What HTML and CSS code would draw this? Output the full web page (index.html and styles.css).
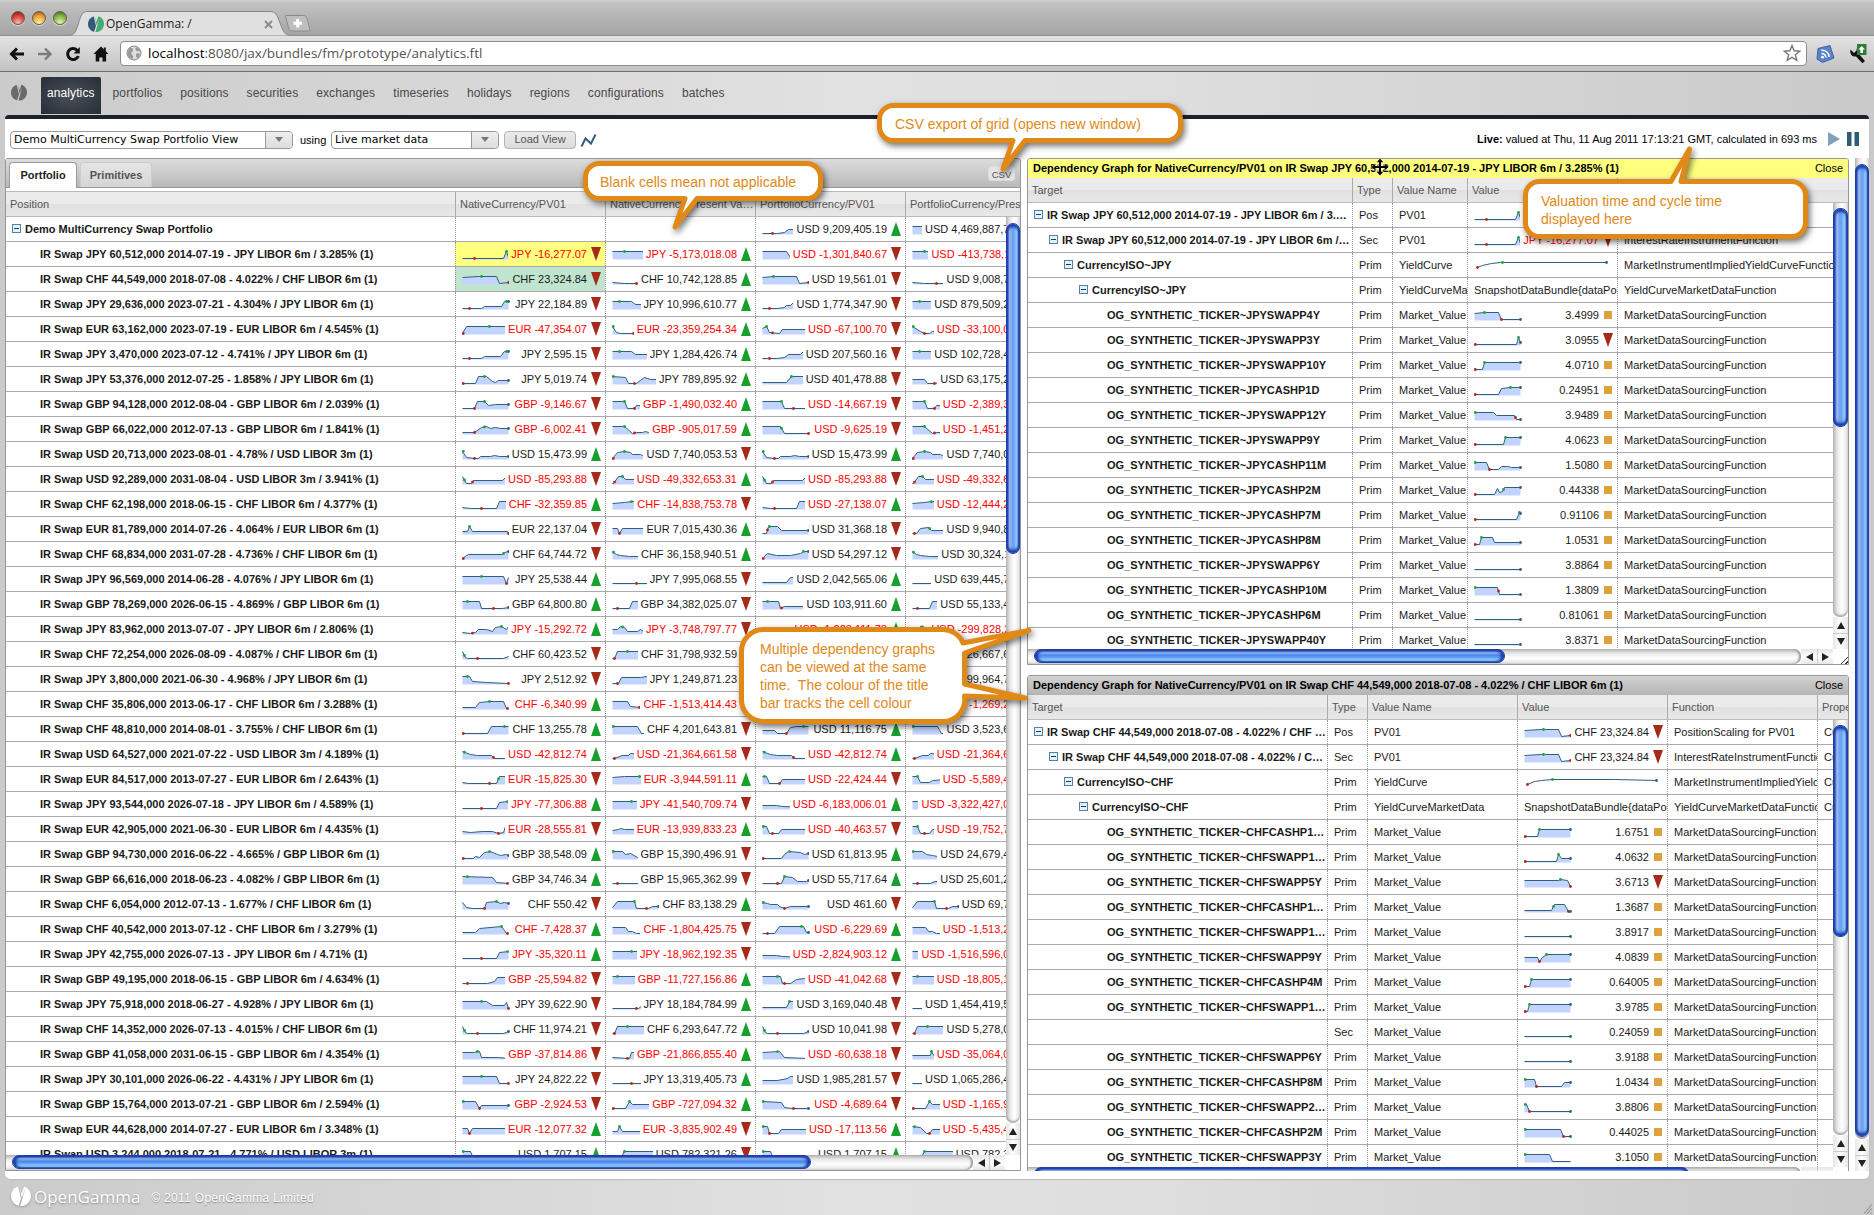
FILE: index.html
```html
<!DOCTYPE html>
<html lang="en">
<head>
<meta charset="utf-8">
<title>OpenGamma: /</title>
<link rel="stylesheet" href="styles.css">
</head>
<body>
<svg class="defs" aria-hidden="true">
  <symbol id="mark" viewBox="0 0 20 20">
    <path class="mark-a" d="M7.2 .6C3 1.500 0 5.200 0 10c0 4.900 3.100 8.800 7.600 9.700L10 12.500z"/>
    <path class="mark-b" d="M8.600.2 10.600 7.600 12.900.4C17 1.600 20 5.300 20 10c0 5.200-4 9.600-8.800 10H9.300L14.200 2.800 10.800 12z"/>
  </symbol>
</svg>

<header class="chrome">
  <div class="tabstrip">
    <div class="lights"><i class="l-red"></i><i class="l-amber"></i><i class="l-green"></i></div>
    <div class="tab">
      <svg class="tab-shape" viewBox="0 0 222 25"><path d="M0 24.500C6 24 7 20 9 14S12 .5 18 .5H201C207 .5 208 4 211 12S215 24 222 24.500" /></svg>
      <svg class="favicon"><use href="#mark"/></svg>
      <span class="tab-title">OpenGamma: /</span>
      <svg class="tab-close" viewBox="0 0 9 9"><path d="M1 1l7 7M8 1l-7 7"/></svg>
    </div>
    <svg class="newtab" viewBox="0 0 26 17"><path class="nt-box" d="M1 .5H18.500C21 .5 21.500 2 23 7L24.500 13.500C25 15.500 24.500 16 22.500 16H7C4.500 16 4 14 3 11L1 3C.5 1.500.5.5 1 .5z"/><path class="nt-plus" d="M8.500 8.300h8.500M12.700 4v8.600"/></svg>
  </div>
  <div class="toolbar">
    <svg class="tb-icon" viewBox="0 0 16 16"><path d="M8 2.500 2.500 8 8 13.500M3 8h12"/></svg>
    <svg class="tb-icon dim" viewBox="0 0 16 16"><path d="M8 2.500 13.500 8 8 13.500M13 8H1"/></svg>
    <svg class="tb-icon" viewBox="0 0 16 16"><path d="M12.500 4.600A5.500 5.500 0 1 0 13.300 10"/><path class="solid" d="M14.800 1v6.500H8.600z"/></svg>
    <svg class="tb-icon" viewBox="0 0 16 16"><path class="solid" d="M8 .5 .5 8h2.200v7.500h3.600v-4h3.200v4h3.600V8h2.400L12.800 5.200V1.500h-2V3.300z"/></svg>
    <div class="omnibox">
      <svg class="globe" viewBox="0 0 16 16"><circle cx="8" cy="8" r="7"/><path d="M3 3.500C6 2 7 3 7 5S4.500 7.500 5.500 9 8 11 6.500 14C3 13 1.500 10 1.500 7.500zM10 2c-1 2-.5 3.500 1 4s2.500 0 3.300.8C14 4.500 12.500 2.600 10 2zM10.500 8.500c1.500-.5 3 0 3.500 1-.5 2-1.800 3.300-3 4-.8-1.500-1.500-4-.5-5z"/></svg>
      <span class="url"><b>localhost</b>:8080/jax/bundles/fm/prototype/analytics.ftl</span>
      <svg class="star" viewBox="0 0 18 18"><path d="M9 1.500l2.100 5.300 5.600.4-4.300 3.600 1.400 5.500L9 13.300l-4.800 3 1.400-5.500L1.300 7.200l5.600-.4z"/></svg>
    </div>
    <svg class="rss" viewBox="0 0 20 20"><path class="rss-bg" d="M3 4.500 15 1.500 19 14 7.500 18.500 2 15z"/><circle cx="7.500" cy="13.200" r="1.400"/><path class="rss-arc" d="M6.500 9.500c2.500 0 4.200 1.500 4.500 4M6.300 6.300c4.500-.2 7.500 2.600 7.900 6.500"/></svg>
    <svg class="wrench" viewBox="0 0 18 20"><path class="wr" d="M1.500 5.500 5 9l2.500-2.500L8 3.500C11 6 10 9 9.500 9.500L16 17l-2.500 2.300L7 12.500C3 13 .5 10 1.500 5.500z"/><path class="wr-up" d="M8 0h9.500v11H8z"/><path class="wr-arrow" d="M12.700 2 16 5.500h-2V9h-2.600V5.500h-2z"/></svg>
  </div>
</header>

<nav class="nav">
  <svg class="nav-mark"><use href="#mark"/></svg>
  <a class="on">analytics</a><a>portfolios</a><a>positions</a><a>securities</a><a>exchanges</a><a>timeseries</a><a>holidays</a><a>regions</a><a>configurations</a><a>batches</a>
</nav>

<main class="page">
  <div class="controls">
    <div class="combo combo-view"><span>Demo MultiCurrency Swap Portfolio View</span><i></i></div>
    <label>using</label>
    <div class="combo combo-data"><span>Live market data</span><i></i></div>
    <button class="load">Load View</button>
    <svg class="pulse" viewBox="0 0 18 15"><path d="M1.500 13.500 5.500 5.500 11 10.500 15.500 1.500"/></svg>
    <p class="status"><b>Live:</b> valued at Thu, 11 Aug 2011 17:13:21 GMT, calculated in 693 ms</p>
    <svg class="play" viewBox="0 0 12 14"><path d="M0 0 12 7 0 14z"/></svg>
    <svg class="pause" viewBox="0 0 12 14"><path d="M0 0h4.500v14H0zM7.500 0H12v14H7.500z"/></svg>
  </div>
  <div class="work">
    <section class="panel portfolio">
      <div class="tabs"><a class="on">Portfolio</a><a>Primitives</a><span class="csv">CSV</span></div>
      <div class="head"><span>Position</span><span>NativeCurrency/PV01</span><span>NativeCurrency/Present Value</span><span>PortfolioCurrency/PV01</span><span class="cut">PortfolioCurrency/Present Value</span></div>
      <div class="view"><div class="rows" id="portfolio"></div>
        <div class="vbar"><div class="track"><div class="thumb"></div></div><div class="btn up"></div><div class="btn down"></div></div>
      </div>
      <div class="hbar"><div class="track"><div class="thumb"></div></div><div class="btn left"></div><div class="btn right"></div><div class="corner"></div></div>
    </section>
    <div class="graphs">
      <section class="panel graph graph-jpy">
        <div class="title"><b>Dependency Graph for NativeCurrency/PV01 on IR Swap JPY 60,512,000 2014-07-19 - JPY LIBOR 6m / 3.285% (1)</b><span>Close</span></div>
        <div class="head"><span>Target</span><span>Type</span><span>Value Name</span><span>Value</span><span>Function</span></div>
        <div class="view"><div class="rows" id="jpy"></div>
          <div class="vbar"><div class="track"><div class="thumb"></div></div><div class="btn up"></div><div class="btn down"></div></div>
        </div>
        <div class="hbar"><div class="track"><div class="thumb"></div></div><div class="btn left"></div><div class="btn right"></div><div class="corner grip"></div></div>
      </section>
      <section class="panel graph graph-chf">
        <div class="title"><b>Dependency Graph for NativeCurrency/PV01 on IR Swap CHF 44,549,000 2018-07-08 - 4.022% / CHF LIBOR 6m (1)</b><span>Close</span></div>
        <div class="head"><span>Target</span><span>Type</span><span>Value Name</span><span>Value</span><span>Function</span><span class="cut">Properties</span></div>
        <div class="view"><div class="rows" id="chf"></div>
          <div class="vbar"><div class="track"><div class="thumb"></div></div><div class="btn up"></div><div class="btn down"></div></div>
        </div>
        <div class="hbar"><div class="track"><div class="thumb"></div></div><div class="btn left"></div><div class="btn right"></div><div class="corner grip"></div></div>
      </section>
    </div>
    <div class="vbar outer"><div class="track"><div class="thumb"></div></div><div class="btn up"></div><div class="btn down"></div></div>
  </div>
</main>

<footer class="foot">
  <svg class="foot-mark"><use href="#mark"/></svg>
  <span class="brand">OpenGamma</span>
  <span class="copy">© 2011 OpenGamma Limited</span>
  <svg class="foot-grip" viewBox="0 0 10 12"><path d="M0 12 10 0M4 12l6-7M8 12l2-2"/></svg>
</footer>

<div class="callout c-csv">
  <svg viewBox="0 0 306 72"><path d="M17 2.500H289A14 14 0 0 1 303.500 17V23A14 14 0 0 1 289 37.500H148L126 66 136 37.500H17A14 14 0 0 1 2.500 23V17A14 14 0 0 1 17 2.500z"/></svg>
  <p>CSV export of grid (opens new window)</p>
</div>
<div class="callout c-blank">
  <svg viewBox="0 0 240 72"><path d="M17 2.500H223A14 14 0 0 1 237.500 17V23A14 14 0 0 1 223 37.500H114L92 66 102 37.500H17A14 14 0 0 1 2.500 23V17A14 14 0 0 1 17 2.500z"/></svg>
  <p>Blank cells mean not applicable</p>
</div>
<div class="callout c-time">
  <svg viewBox="0 0 285 96"><path d="M17 36.500H148L166.500 4 158 36.500H268A14 14 0 0 1 282.500 51V77A14 14 0 0 1 268 91.500H17A14 14 0 0 1 2.500 77V51A14 14 0 0 1 17 36.500z"/></svg>
  <p>Valuation time and cycle time<br>displayed here</p>
</div>
<div class="callout c-graphs">
  <svg viewBox="0 0 294 98"><path d="M25 2.500H203A22 22 0 0 1 224 16L290 3.500 225.500 26V57L286 71 225.500 69A22 22 0 0 1 203 94.500H25A22 22 0 0 1 2.500 72V25A22 22 0 0 1 25 2.500z"/></svg>
  <p>Multiple dependency graphs<br>can be viewed at the same<br>time.&nbsp; The colour of the title<br>bar tracks the cell colour</p>
</div>
<svg class="move" viewBox="0 0 18 18"><path d="M9 .5l3.300 3.800H10V8h3.700V5.700L17.500 9l-3.800 3.300V10H10v3.700h2.300L9 17.500l-3.300-3.800H8V10H4.300v2.300L.5 9l3.800-3.300V8H8V4.300H5.700z"/></svg>
<script src="app.js"></script>
</body>
</html>
```
FILE: styles.css
```css
* { box-sizing: border-box; }
html, body { height: 100%; }
body {
  margin: 0; display: flex; flex-direction: column; overflow: hidden;
  font: 11px/24px "Liberation Sans", Arial, sans-serif; color: #1a1a1a;
  background: linear-gradient(90deg, #cbcbcb, #e1e1e1 45%, #dfdfdf 60%, #c9c9c9);
}
p { margin: 0; }
svg { display: block; flex: none; }
.defs { position: absolute; width: 0; height: 0; }

/* browser frame */
.tabstrip {
  display: flex; height: 36px; padding: 11px 0 0 11px; border-bottom: 1px solid #8d8d8d;
  background: linear-gradient(#cfcfcf, #c2c2c2 8%, #a4a4a4);
}
.lights { display: flex; gap: 7px; width: 61px; }
.lights i { width: 14px; height: 14px; border-radius: 50%; border: 1px solid #6b5a50; box-shadow: 0 1px 1px #ddd; }
.l-red { background: radial-gradient(circle at 50% 90%, #f9b9b0, #d5443a 55%, #7d100c); }
.l-amber { background: radial-gradient(circle at 50% 90%, #fff3a0, #eda438 55%, #8c4a05); }
.l-green { background: radial-gradient(circle at 50% 90%, #e2f9a8, #82b844 55%, #35640d); }
.tab { display: flex; align-items: center; position: relative; width: 214px; height: 25px; padding: 1px 0 0 16px; margin-right: -1px; }
.tab-shape { position: absolute; left: -3px; top: 0; width: 222px; height: 25px; fill: #e0e0e0; stroke: #888; }
.favicon { position: relative; width: 16px; height: 16px; --a: #35597a; --b: #43ab74; }
.mark-a { fill: var(--a); }
.mark-b { fill: var(--b); }
.tab-title { position: relative; margin-left: 2px; color: #222; font: 12px/16px "Open Sans", sans-serif; width: 158px; }
.tab-close { position: relative; width: 9px; height: 9px; stroke: #8c8c8c; stroke-width: 2; }
.newtab { width: 26px; height: 17px; margin-top: 4px; }
.nt-box { fill: #bebebe; stroke: #8a8a8a; }
.nt-plus { stroke: #fff; stroke-width: 3; }
.toolbar {
  display: flex; align-items: center; height: 36px; padding: 0 7px 0 9px; border-bottom: 1px solid #6e6e6e;
  background: linear-gradient(#e2e2e2, #c3c3c3);
}
.tb-icon { width: 16px; height: 16px; margin-right: 12px; fill: none; stroke: #111; stroke-width: 3; }
.tb-icon.dim { stroke: #7b7b7b; stroke-width: 2.400; }
.tb-icon .solid { fill: #111; stroke: none; }
.omnibox {
  display: flex; align-items: center; flex: 1; height: 25px; margin: -1px 8px 0 -1px; padding: 0 5px;
  background: #fff; border: 1px solid #8c8c8c; border-radius: 4px;
}
.globe { width: 16px; height: 16px; stroke: #888; fill: #ddd; }
.globe path { fill: #999; stroke: none; }
.url { flex: 1; margin-left: 6px; font: 13.500px/20px "Open Sans", sans-serif; color: #555; }
.url b { font-weight: 400; color: #000; }
.star { width: 18px; height: 18px; fill: #fff; stroke: #777; stroke-width: 1.400; }
.rss { width: 20px; height: 20px; margin-right: 14px; fill: #fff; }
.rss-bg { fill: #5b83c9; stroke: #3f63a5; stroke-linejoin: round; }
.rss-arc { fill: none; stroke: #fff; stroke-width: 1.600; }
.wrench { width: 18px; height: 20px; }
.wr { fill: #111; }
.wr-up { fill: #2d7b34; }
.wr-arrow { fill: #fff; }

/* site navigation */
.nav { display: flex; height: 43px; padding: 5px 0 0 11px; font-size: 12px; line-height: 32px; letter-spacing: .1px; color: #484848; }
.nav-mark { width: 16px; height: 17px; margin: 7px 14px 0 0; --a: #6a6a6a; --b: #6a6a6a; }
.nav a { padding: 0 9px; }
.nav .on { padding: 0 6px; margin-right: 3px; height: 37px; color: #fff; border-radius: 2px 2px 0 0; background: radial-gradient(#4a5058, #272d36); }

.page { flex: none; height: 1064px; width: 1864px; margin-left: 5px; border-top: 4px solid #1c212b; border-radius: 4px 4px 5px 5px; background: #fff; box-shadow: 0 1px 1px #bbb; }
.controls { display: flex; align-items: center; height: 39px; padding: 2px 10px 0 5px; }
.combo { display: flex; height: 18px; border: 1px solid #999; border-radius: 4px; background: #fff; font: 11px/16px "DejaVu Sans", sans-serif; color: #000; }
.combo span { flex: 1; padding-left: 3px; white-space: nowrap; }
.combo i { display: flex; justify-content: center; align-items: center; width: 27px; border-left: 1px solid #999; background: linear-gradient(#eee, #ddd); border-radius: 0 4px 4px 0; }
.combo i::after { content: ""; border: 4px solid transparent; border-top: 5px solid #777; border-bottom: 0; }
.combo-view { width: 283px; }
.combo-data { width: 168px; }
.controls label { width: 38px; padding-left: 7px; color: #000; }
.load { width: 72px; height: 18px; margin-left: 5px; padding: 0; font: 11px/15px "Liberation Sans", Arial, sans-serif; color: #555; border: 1px solid #b5b5b5; border-radius: 4px; background: linear-gradient(#eaeaea, #dcdcdc); }
.pulse { width: 18px; height: 15px; margin: 2px 0 0 4px; fill: none; stroke: #365f7d; stroke-width: 2; }
.status { flex: 1; text-align: right; color: #000; margin-top: -1px; }
.play { width: 12px; height: 14px; margin: -1px 7px 0 11px; fill: #7fa3bb; }
.pause { width: 12px; height: 14px; margin-top: -1px; fill: #2e5c7b; }

.work { display: flex; gap: 6px; height: 1013px; }
.panel { display: flex; flex-direction: column; border: 1px solid #989898; border-radius: 3px 3px 0 0; overflow: hidden; background: #fff; }
.portfolio { width: 1016px; --cols: 449px repeat(4, 150px); }
.graphs { display: flex; flex-direction: column; gap: 10px; width: 822px; overflow: hidden; }
.graph { flex: none; }
.graph-jpy { height: 507px; --cols: 324px 40px 75px 150px 1fr; --title: #ffff7e; }
.graph-chf { height: 508px; --cols: 299px 40px 150px 150px 150px 1fr; --title: linear-gradient(#d2d2d2, #b4b4b4); }

.tabs { display: flex; flex: none; height: 29px; padding: 3px 5px 0 3px; border-bottom: 1px solid #999; background: linear-gradient(#dcdcdc, #b9b9b9); font-weight: 700; }
.tabs a { height: 25px; width: 72px; text-align: center; color: #555; border: 1px solid #ccc; border-bottom: 0; border-radius: 4px 4px 0 0; background: linear-gradient(#e6e6e6, #d4d4d4); }
.tabs .on { width: 68px; height: 26px; margin-right: 3px; color: #222; background: #fff; border-color: #999; }
.csv { margin: 4px 0 0 auto; width: 27px; height: 15px; font: 9.500px/15px "Liberation Sans", Arial, sans-serif; text-align: center; color: #555; background: #e4e4e4; border: 1px solid #ddd; border-radius: 3px; }

.title { display: flex; flex: none; justify-content: space-between; height: 19px; padding: 0 5px; font-size: 11px; line-height: 18px; color: #000; background: var(--title); white-space: nowrap; }
.head { display: grid; flex: none; grid-template-columns: var(--cols); height: 25px; color: #555; border-bottom: 1px solid #bbb; background: linear-gradient(#ebebeb 50%, #e0e0e0 50%, #e8e8e8); }
.portfolio .head { height: 26px; margin-top: 3px; border-top: 1px solid #bbb; }
.head span { padding-left: 4px; overflow: hidden; text-overflow: ellipsis; white-space: nowrap; }
.head span + span { border-left: 1px solid #aaa; }
.head .cut { text-overflow: clip; }

.view { display: flex; flex: 1; min-height: 0; }
.rows { flex: 1; min-width: 0; overflow: hidden; }
.row { display: grid; grid-template-columns: var(--cols); height: 25px; border-bottom: 1px solid #aaa; }
.row > div { display: flex; min-width: 0; overflow: hidden; white-space: nowrap; }
.row > div + div { border-left: 1px dotted #999; padding-left: 6px; }
.name { font-weight: 700; }
.name span { overflow: hidden; text-overflow: ellipsis; padding-right: 1px; }
.tog { flex: none; width: 9px; height: 9px; margin: 7px 4px 0 0; border: 1px solid #56809f; background: linear-gradient(#1c3c66, #1c3c66) center / 5px 1px no-repeat, #e0f4fc; }
.neg { color: #f00; }
.cell-sel { background: #ffff80; }
.cell-green { background: #bfe5cf; }
.spark { flex: 1; min-width: 0; height: 14px; margin: 7px 3px 0 0; overflow: hidden; }
.spark svg { width: 140px; height: 14px; }
.s-fill { fill: #c2d3fd; }
.s-line { fill: none; stroke: #2f607f; }
.s-g { fill: #1ca53a; }
.s-r { fill: #c02318; }
.s-b { fill: #2f607f; }
.mk { flex: none; width: 10px; height: 14px; margin: 5px 4px 0 4px; }
.mk-u { background: #18a02c; clip-path: polygon(50% 0, 100% 100%, 0 100%); }
.mk-d { background: #a52a1a; clip-path: polygon(0 0, 100% 0, 50% 100%); }
.mk-s { width: 8px; height: 8px; margin: 8px 5px 0 5px; background: #dda23e; }

/* scrollbars */
.vbar { display: flex; flex-direction: column; flex: none; width: 14px; background: #fff; }
.graph .vbar { width: 15px; }
.hbar { display: flex; flex: none; height: 15px; background: #fff; }
.track { flex: 1; }
.vbar .track { padding-top: var(--start, 6px); border-radius: 0 0 7px 7px; background: linear-gradient(90deg, #b5b5b5, #e9e9e9 30%, #fff 60%, #e3e3e3); box-shadow: inset 0 -2px 2px #aaa; }
.hbar .track { padding-left: 6px; border-radius: 0 7px 7px 0; background: linear-gradient(#b5b5b5, #e9e9e9 30%, #fff 60%, #e3e3e3); box-shadow: inset -2px 0 2px #999; }
.vbar .thumb { height: var(--len); border-radius: 7px; border: 1px solid #1f3fa8; box-shadow: inset 0 3px 3px #1638a6, inset 0 -3px 3px #1638a6; background: linear-gradient(90deg, #2248b8, #9fc0f4 22%, #6f9ff0 45%, #6aa5f5 60%, #a5dcff 85%, #2a55b8); }
.hbar .thumb { width: var(--len); height: 14px; border-radius: 7px; border: 1px solid #1f3fa8; box-shadow: inset 3px 0 3px #1638a6, inset -3px 0 3px #1638a6; background: linear-gradient(#1f3fb0, #8db3f1 22%, #4e86ea 45%, #5c9cf5 60%, #a8e2ff 88%, #4a7bc8); }
.btn { display: flex; align-items: center; justify-content: center; background: linear-gradient(90deg, #e6e6e6, #fff 50%, #e6e6e6); }
.btn::after { content: ""; border: 4px solid transparent; }
.vbar .btn { height: 16px; }
.hbar .btn { width: 16px; background: linear-gradient(#e6e6e6, #fff 50%, #e6e6e6); }
.btn.up::after { border-bottom: 7px solid #222; border-top: 0; }
.btn.down { border-top: 1px solid #ccc; }
.btn.down::after { border-top: 7px solid #222; border-bottom: 0; }
.btn.left::after { border-right: 7px solid #222; border-left: 0; }
.btn.right { border-left: 1px solid #ccc; }
.btn.right::after { border-left: 7px solid #222; border-right: 0; }
.corner { width: 15px; background: #fff; }
.grip { background: repeating-linear-gradient(135deg, #333 0 1px, #fff 1px 3px) 8px 6px / 7px 9px no-repeat; clip-path: polygon(100% 30%, 100% 100%, 45% 100%); }
.portfolio .vbar { --len: 331px; }
.portfolio .hbar { --len: 799px; }
.graph-jpy .vbar { --start: 5px; --len: 219px; }
.graph-jpy .hbar { --len: 471px; }
.graph-chf .vbar { --start: 5px; --len: 212px; }
.graph-chf .hbar { --len: 655px; }
.outer { --len: 973px; }

.foot { display: flex; align-items: center; flex: 1; padding: 0 2px 0 11px; color: #fff; }
.foot-mark { width: 20px; height: 20px; --a: #fff; --b: #fff; filter: drop-shadow(0 1px 1px #999); margin-top: -2px; }
.brand { margin: 0 11px 0 3px; font: 17px/24px "Open Sans", sans-serif; text-shadow: 0 1px 2px #888; }
.copy { flex: 1; font-size: 12px; letter-spacing: .3px; text-shadow: 0 1px 1px #888; margin-top: 2px; }
.foot-grip { width: 8px; height: 12px; align-self: flex-end; stroke: #777; }

/* annotations floating over the page */
.callout { position: absolute; color: #e08917; font-size: 14px; line-height: 18px; }
.callout svg { width: 100%; overflow: visible; fill: #fff; stroke: #e08917; stroke-width: 5; stroke-linejoin: round; filter: drop-shadow(2px 3px 3px rgba(0,0,0,.55)); }
.callout p { position: absolute; white-space: nowrap; }
.c-csv { left: 877px; top: 103px; width: 306px; }
.c-csv p { left: 18px; top: 12px; }
.c-blank { left: 583px; top: 161px; width: 240px; }
.c-blank p { left: 17px; top: 12px; }
.c-time { left: 1523px; top: 145px; width: 285px; }
.c-time p { left: 18px; top: 47px; }
.c-graphs { left: 739px; top: 627px; width: 294px; }
.c-graphs p { left: 21px; top: 13px; }
.move { position: absolute; left: 1371px; top: 158px; width: 18px; height: 18px; fill: #000; stroke: #fff; stroke-width: .8; paint-order: stroke; }
```
FILE: app.js
```js
// Each cell is "text;points;dots". Points are x,y pairs in px, y 0 is the high line.
// Dots: r = low, g = high, b = last value, followed by the x position.
const FLAT_LOW = '0,7 46,7', FLAT_HIGH = '0,0 46,0';
const portfolio = [
  ['JPY 60,512,000 2014-07-19 - JPY LIBOR 6m / 3.285% (1)', 'd', 'JPY -16,277.07;0,7 41,7 44,0 46,6;r12 g44', 'JPY -5,173,018.08;0,0 46,0;g12', 'USD -1,301,840.67;0,0 24,0 28,6 46,6;', 'USD -413,738,112.40;0,0 46,0;g12'],
  ['CHF 44,549,000 2018-07-08 - 4.022% / CHF LIBOR 6m (1)', 'd', 'CHF 23,324.84;0,1 16,0 34,0 37,7 46,6;r46 g19', 'CHF 10,742,128.85;0,6 12,7 46,7;r24', 'USD 19,561.01;0,1 11,0 34,0 37,7 46,6;r46 g11', 'USD 9,008,746.21'],
  ['JPY 29,636,000 2023-07-21 - 4.304% / JPY LIBOR 6m (1)', 'd', 'JPY 22,184.89;0,7 19,7 22,5 39,5 42,0 46,0;r7 g44 b46', 'JPY 10,996,610.77;0,0 19,0 23,3 46,3;g7', 'USD 1,774,347.90;0,7 15,7 22,6 24,4 28,4 31,1 46,1;r7', 'USD 879,509,214.60'],
  ['EUR 63,162,000 2023-07-19 - EUR LIBOR 6m / 4.545% (1)', 'd', 'EUR -47,354.07;0,7 4,0 46,0;r0 g27', 'EUR -23,359,254.34;0,0 4,6 8,7 46,7;g0 r21', 'USD -67,100.70;0,2 4,0 7,6 17,7 20,3 46,3;g4 r10', 'USD -33,100,063.44;0,0 8,5 12,7 17,7 20,5 46,5;g0 r12'],
  ['JPY 3,470,000 2023-07-12 - 4.741% / JPY LIBOR 6m (1)', 'd', 'JPY 2,595.15;0,7 19,7 22,5 38,5 42,0 46,0;r7 g44 b46', 'JPY 1,284,426.74;0,0 19,0 23,3 46,3;g7', 'USD 207,560.16;0,7 15,7 22,6 26,3 38,3 41,0;r7', 'USD 102,728,450.18'],
  ['JPY 53,376,000 2012-07-25 - 1.858% / JPY LIBOR 6m (1)', 'd', 'JPY 5,019.74;0,7 13,7 16,0 24,0 30,5 33,6 36,4 46,4;r0 g22 b46', 'JPY 789,895.92;0,0 13,1 16,7 24,7 29,3 32,1 35,2 38,3 46,3;g0 r22', 'USD 401,478.88;0,6 24,6 29,0 46,0;g29', 'USD 63,175,281.90;0,3 12,3 15,7 24,7 26,4;r22'],
  ['GBP 94,128,000 2012-08-04 - GBP LIBOR 6m / 2.039% (1)', 'd', 'GBP -9,146.67;0,7 12,7 15,0 22,0 26,4 33,3 46,3;r12 g22 b46', 'GBP -1,490,032.40;0,0 12,0 15,7 22,7 24,4 46,4;g12 r22', 'USD -14,667.19;0,0 19,0 22,7 46,7;g19 r31', 'USD -2,389,351.70'],
  ['GBP 66,022,000 2012-07-13 - GBP LIBOR 6m / 1.841% (1)', 'd', 'GBP -6,002.41;0,6 12,6 19,1 24,0 28,2 33,1 38,2 46,2;r12 g22 b46', 'GBP -905,017.59;0,0 12,0 20,7 24,6 30,6 33,5 36,6 46,5;g12 r22', 'USD -9,625.19;0,0 18,0 22,7 46,7;g19 r46', 'USD -1,451,214.05'],
  ['USD 20,713,000 2023-08-01 - 4.78% / USD LIBOR 3m (1)', 'u', 'USD 15,473.99;0,0 4,6 12,7 16,7 18,5 28,5 32,4 37,5 46,5;g0 r12 b46', 'USD 7,740,053.53;0,7 5,1 12,0 18,1 20,3 28,3 30,4 46,4;r0 g12', 'USD 15,473.99;0,0 4,6 12,7 16,7 18,5 28,5 32,4 37,5 46,5;g0 r12 b46', 'USD 7,740,053.53'],
  ['USD 92,289,000 2031-08-04 - USD LIBOR 3m / 3.941% (1)', 'd', 'USD -85,293.88;0,0 4,7 9,7 11,4 40,4 43,1 46,1;g2 r10', 'USD -49,332,653.31;0,7 1,7 6,0 10,0 13,3 46,3;r2 g10', 'USD -85,293.88;0,0 4,7 9,7 11,4 40,4 43,1 46,1;g2 r10', 'USD -49,332,653.31'],
  ['CHF 62,198,000 2018-06-15 - CHF LIBOR 6m / 4.377% (1)', 'u', 'CHF -32,359.85;0,6 8,7 34,7 37,0 46,0;r19', 'CHF -14,838,753.78;0,2 12,1 20,0 46,0;g19', 'USD -27,138.07;0,6 8,7 34,7 37,0 46,0;r12', 'USD -12,444,236.92'],
  ['EUR 81,789,000 2014-07-26 - 4.064% / EUR LIBOR 6m (1)', 'd', 'EUR 22,137.04;0,5 5,5 7,0 10,5 45,5 46,7;g7 r46', 'EUR 7,015,430.36;0,2 5,2 7,7 10,2 46,2;r7', 'USD 31,368.18;0,7 4,7 6,0 15,0 19,4 46,4;r5 g7 b46', 'USD 9,940,864.82;0,7 4,7 8,2 16,1 19,4 46,4;r2 g17'],
  ['CHF 68,834,000 2031-07-28 - 4.736% / CHF LIBOR 6m (1)', 'd', 'CHF 64,744.72;0,7 4,4 6,3 40,3 42,1 46,0;r0 g41 b46', 'CHF 36,158,940.51;0,0 4,3 8,4 17,5 46,5;g1', 'USD 54,297.12;0,7 5,2 14,4 28,4 38,2 41,0 46,0;r0 g41 b46', 'USD 30,324,117.30'],
  ['JPY 96,569,000 2014-06-28 - 4.076% / JPY LIBOR 6m (1)', 'u', 'JPY 25,538.44;0,0 41,0 44,7 46,1;g19 r44', 'JPY 7,995,068.55;0,7 46,7;r24', 'USD 2,042,565.06;0,6 24,6 28,1 46,1;', 'USD 639,445,760.23;0,7 46,7;'],
  ['GBP 78,269,000 2026-06-15 - 4.869% / GBP LIBOR 6m (1)', 'u', 'GBP 64,800.80;0,0 17,0 19,7 40,7 46,6;g5 r31 b46', 'GBP 34,382,025.07;0,7 17,7 20,0 46,0;r5', 'USD 103,911.60;0,0 16,0 18,7 22,5 46,5;g5 r19', 'USD 55,133,409.15'],
  ['JPY 83,962,000 2013-07-07 - JPY LIBOR 6m / 2.806% (1)', 'u', 'JPY -15,292.72;0,6 8,7 13,6 16,3 24,3 30,5 33,1 39,0 44,3 46,0;r10 g39', 'JPY -3,748,797.77;0,3 5,3 8,0 12,1 15,5 25,5 28,3 31,5 46,5;g10', 'USD -1,223,111.78;0,4 20,5 46,5;', 'USD -299,828,230.11'],
  ['CHF 72,254,000 2026-08-09 - 4.087% / CHF LIBOR 6m (1)', 'd', 'CHF 60,423.52;0,0 3,6 5,7 41,7 46,5;g2 r15', 'CHF 31,798,932.59;0,7 2,7 5,0 46,0;r2 g15', 'USD 50,673.21;0,0 3,6 5,7 46,7;g2', 'USD 26,667,601.37'],
  ['JPY 3,800,000 2021-06-30 - 4.968% / JPY LIBOR 6m (1)', 'd', 'JPY 2,512.92;0,0 7,0 10,5 24,6 46,7;g5 r46', 'JPY 1,249,871.23;0,7 6,7 9,1 28,1 34,0 46,0;r5', 'USD 200,985.10;0,0 10,5 46,6;g5', 'USD 99,964,720.88'],
  ['CHF 35,806,000 2013-06-17 - CHF LIBOR 6m / 3.288% (1)', 'u', 'CHF -6,340.99;0,6 13,6 17,1 27,0 41,0 44,7 46,7;g27 r45', 'CHF -1,513,414.43;0,0 15,0 18,5 28,6 46,6;r27', 'USD -5,317.79;0,6 17,1 46,0;g27', 'USD -1,269,218.60'],
  ['CHF 48,810,000 2014-08-01 - 3.755% / CHF LIBOR 6m (1)', 'u', 'CHF 13,255.78;0,7 25,7 29,0 46,0;r0 g42', 'CHF 4,201,643.81;0,0 25,0 29,7 46,7;g0', 'USD 11,116.75;0,4 12,4 15,7 24,7 28,1 34,0 46,0;r24 g41', 'USD 3,523,684.49'],
  ['USD 64,527,000 2021-07-22 - USD LIBOR 3m / 4.189% (1)', 'u', 'USD -42,812.74;0,0 8,3 15,4 29,4 32,7 46,7;g2 r31', 'USD -21,364,661.58;0,7 2,7 10,4 16,4 18,2 46,4;r2', 'USD -42,812.74;0,0 8,3 15,4 29,4 32,7 46,7;g2 r31', 'USD -21,364,661.58'],
  ['EUR 84,517,000 2013-07-27 - EUR LIBOR 6m / 2.643% (1)', 'd', 'EUR -15,825.30;0,6 6,7 34,7 37,0 46,0;r27 g36', 'EUR -3,944,591.11;0,1 12,0 46,0;g27', 'USD -22,424.44;0,0 4,0 7,7 17,7 20,3 46,3;g2 r17', 'USD -5,589,485.60;0,0 5,0 8,6 17,6 20,4 46,2;g5'],
  ['JPY 93,544,000 2026-07-18 - JPY LIBOR 6m / 4.589% (1)', 'u', 'JPY -77,306.88;0,7 34,7 37,1 46,0;r19 g45', 'JPY -41,540,709.74;0,0 46,0;g19', 'USD -6,183,006.01;0,4 14,4 20,5 46,6;', 'USD -3,322,427,018.70;0,0 46,0;'],
  ['EUR 42,905,000 2021-06-30 - EUR LIBOR 6m / 4.435% (1)', 'd', 'EUR -28,555.81;0,5 8,6 20,5 30,5 36,7 41,6 43,0;r36', 'EUR -13,939,833.23;0,4 6,3 8,2 12,3 46,3;', 'USD -40,463.57;0,0 4,0 7,7 16,7 19,3 46,3;g0 r10', 'USD -19,752,743.69;0,0 5,0 8,7 17,7 20,3 46,3;g5 r12'],
  ['GBP 94,730,000 2016-06-22 - 4.665% / GBP LIBOR 6m (1)', 'u', 'GBP 38,548.09;0,7 11,7 13,5 17,6 22,1 28,0 35,3 38,4 44,3 46,4;r0 g27 b46', 'GBP 15,390,496.91;0,0 10,0 13,3 18,2 25,6 46,6;g0', 'USD 61,813.95;0,7 19,7 22,3 26,0 38,1 42,3 46,2;r0 g27 b46', 'USD 24,679,461.80;0,0 10,0 14,3 20,4 25,5;g0'],
  ['GBP 66,616,000 2018-06-23 - 4.082% / GBP LIBOR 6m (1)', 'u', 'GBP 34,746.34;0,0 30,1 34,6 46,7;g5 r45', 'GBP 15,965,362.99;0,7 46,7;r5', 'USD 55,717.64;0,7 19,7 22,0 30,1 35,5 44,5 46,4;r15 g22 b46', 'USD 25,601,259.60;0,7 18,7 22,5 46,5;r5'],
  ['CHF 6,054,000 2012-07-13 - 1.677% / CHF LIBOR 6m (1)', 'd', 'CHF 550.42;0,1 4,6 10,7 22,7 24,1 34,0 38,2 42,1 46,2;r22 g34 b46', 'CHF 83,138.29;0,6 5,0 22,0 24,7 36,7 40,5 46,5;g22 r34 b46', 'USD 461.60;0,1 5,2 8,3 15,3 17,5 22,7 28,5 46,5;g0 r22 b46', 'USD 69,723.10'],
  ['CHF 40,542,000 2013-07-12 - CHF LIBOR 6m / 3.279% (1)', 'u', 'CHF -7,428.37;0,6 13,6 17,2 39,0 42,4 44,7 46,7;g39 r45', 'CHF -1,804,425.75;0,1 13,1 16,5 20,5 24,7 46,7;', 'USD -6,229.69;0,7 12,7 17,0 41,0 44,6 46,6;r5 g39 b46', 'USD -1,513,270.50'],
  ['JPY 42,755,000 2026-07-13 - JPY LIBOR 6m / 4.71% (1)', 'u', 'JPY -35,320.11;0,7 34,7 37,1 46,0;r19 g45', 'JPY -18,962,192.35;0,0 46,0;g19', 'USD -2,824,903.12;0,4 14,4 20,5 46,6;', 'USD -1,516,596,073.20;0,0 46,0;'],
  ['GBP 49,195,000 2018-06-15 - GBP LIBOR 6m / 4.634% (1)', 'd', 'GBP -25,594.82;0,7 25,7 32,5 35,1 46,1;r5', 'GBP -11,727,156.86;0,0 46,0;g5', 'USD -41,042.68;0,0 18,0 20,7 28,7 34,3 42,2 46,2;g15 r22', 'USD -18,805,140.33'],
  ['JPY 75,918,000 2018-06-27 - 4.928% / JPY LIBOR 6m (1)', 'd', 'JPY 39,622.90;0,0 24,0 30,4 42,4 44,1 46,7;g19 r46', 'JPY 18,184,784.99;0,7 26,7 30,4 46,3;r24', 'USD 3,169,040.48;0,6 24,6 27,0 46,0;g27', 'USD 1,454,419,568.20;0,7 46,7;'],
  ['CHF 14,352,000 2026-07-13 - 4.015% / CHF LIBOR 6m (1)', 'd', 'CHF 11,974.21;0,0 3,6 5,7 41,7 46,5;g2 r15 b46', 'CHF 6,293,647.72;0,7 2,7 5,0 46,0;r2 g15', 'USD 10,041.98;0,0 3,6 5,7 41,7 46,5;g2 r15 b46', 'USD 5,278,006.48'],
  ['GBP 41,058,000 2031-06-15 - GBP LIBOR 6m / 4.354% (1)', 'd', 'GBP -37,814.86;0,1 12,1 15,0 17,0 19,6 36,6 46,7;g15', 'GBP -21,866,855.40;0,6 17,7 19,1 46,1;r15', 'USD -60,638.18;0,1 17,0 22,6 46,7;g15', 'USD -35,064,066.90;0,4 18,4 19,0 22,5;g19'],
  ['JPY 30,101,000 2026-06-22 - 4.431% / JPY LIBOR 6m (1)', 'd', 'JPY 24,822.22;0,0 34,0 37,7 46,7;g19 r46', 'JPY 13,319,405.73;0,7 46,7;r19', 'USD 1,985,281.57;0,4 15,4 25,2 28,0 46,0;', 'USD 1,065,286,431.10;0,7 46,7;'],
  ['GBP 15,764,000 2013-07-21 - GBP LIBOR 6m / 2.594% (1)', 'd', 'GBP -2,924.53;0,0 13,0 17,7 19,4 46,4;g0 r17 b46', 'GBP -727,094.32;0,7 13,7 17,0 20,3 46,3;r0 g17', 'USD -4,689.64;0,0 19,1 22,6 30,7 46,7;g0 r31 b46', 'USD -1,165,938.40'],
  ['EUR 44,628,000 2014-07-27 - EUR LIBOR 6m / 3.348% (1)', 'u', 'EUR -12,077.32;0,2 5,2 7,7 10,2 46,2;r7', 'EUR -3,835,902.49;0,5 5,5 7,0 10,5 46,5;g7', 'USD -17,113.56;0,0 5,0 7,7 16,7 19,3 46,3;g0 r7', 'USD -5,435,412.40;0,0 8,1 14,7 17,7 20,3 46,3;g2 r17'],
  ['USD 3,244,000 2018-07-21 - 4.771% / USD LIBOR 3m (1)', 'u', 'USD 1,707.15;0,0 8,0 10,5 46,5;g0', 'USD 782,321.26;0,7 8,7 12,0 46,0;g12', 'USD 1,707.15;0,0 8,0 10,5 46,5;g0', 'USD 782,321.26']
];

const MDS = 'MarketDataSourcingFunction';
const YC = '3,5 8,3 17,1 26,0 133,0';
const tick = (ccy, name, cell, mark = 's', type = 'Prim') =>
  [4, name ? `OG_SYNTHETIC_TICKER~${ccy}${name}` : '', type, 'Market_Value', cell, mark, MDS, ''];
const top4 = (ccy, desc, cell, yc, props) => [
  [0, desc, 'Pos', 'PV01', cell, 'd', 'PositionScaling for PV01', props],
  [1, desc, 'Sec', 'PV01', cell, 'd', 'InterestRateInstrumentFunction', props],
  [2, `CurrencyISO~${ccy}`, 'Prim', 'YieldCurve', `;${yc}`, '', 'MarketInstrumentImpliedYieldCurveFunction', props],
  [3, `CurrencyISO~${ccy}`, 'Prim', 'YieldCurveMarketData', 'SnapshotDataBundle{dataPoints', '', 'YieldCurveMarketDataFunction', props]
];
const jpy = [
  ...top4('JPY', 'IR Swap JPY 60,512,000 2014-07-19 - JPY LIBOR 6m / 3.285% (1)', 'JPY -16,277.07;0,7 41,7 44,0 46,6;r12 g44', `${YC};r3 g28 b132`, ''),
  tick('JPY', 'SWAPP4Y', '3.4999;0,1 10,0 24,0 27,7 46,7;g10 r27 b46'),
  tick('JPY', 'SWAPP3Y', '3.0955;0,7 42,7 44,0 46,5;r0 g44 b46', 'd'),
  tick('JPY', 'SWAPP10Y', '4.0710;0,7 8,7 10,0 46,0;r0 g10 b46'),
  tick('JPY', 'CASHP1D', '0.24951;0,7 24,7 27,1 36,0 46,0;r0 g36 b46'),
  tick('JPY', 'SWAPP12Y', '3.9489;0,0 19,0 22,3 40,3 42,7 46,7;g0 r41 b46'),
  tick('JPY', 'SWAPP9Y', '4.0623;0,7 29,7 31,0 46,0;r0 g31 b46'),
  tick('JPY', 'CASHP11M', '1.5080;0,0 12,0 15,7 24,7 27,4 34,4 37,5 46,5;g0 r15 b46'),
  tick('JPY', 'CASHP2M', '0.44338;0,7 20,7 23,1 25,5 28,4 30,0 46,0;r0 g29 b46'),
  tick('JPY', 'CASHP7M', '0.91106;0,7 42,7 45,0 46,1;r0 g45 b46'),
  tick('JPY', 'CASHP8M', '1.0531;0,7 5,7 7,0 18,0 20,5 46,5;r0 g7 b46'),
  tick('JPY', 'SWAPP6Y', `3.8864;${FLAT_LOW};b46`),
  tick('JPY', 'CASHP10M', '1.3809;0,0 23,0 25,7 46,7;g0 r24 b46'),
  tick('JPY', 'CASHP6M', `0.81061;${FLAT_LOW};b46`),
  tick('JPY', 'SWAPP40Y', `3.8371;${FLAT_LOW};b46`)
];
const chf = [
  ...top4('CHF', 'IR Swap CHF 44,549,000 2018-07-08 - 4.022% / CHF LIBOR 6m (1)', 'CHF 23,324.84;0,1 16,0 34,0 37,7 46,6;r46 g19', `3,5 10,2 17,1 28,0 90,0 133,1;r3 g28 b132`, 'Currency=CHF'),
  tick('CHF', 'CASHP10M', '1.6751;0,7 13,7 15,0 46,0;r0 g15 b46'),
  tick('CHF', 'SWAPP10Y', '4.0632;0,7 32,7 34,0 37,4 46,4;r0 g34 b46'),
  tick('CHF', 'SWAPP5Y', '3.6713;0,1 34,1 36,0 43,1 46,7;g36 r46', 'd'),
  tick('CHF', 'CASHP11M', '1.3687;0,6 27,6 30,0 40,0 44,7 46,7;g29 r44 b46'),
  tick('CHF', 'SWAPP12Y', `3.8917;${FLAT_LOW};b46`),
  tick('CHF', 'SWAPP9Y', '4.0839;0,3 13,3 15,7 18,3 22,0 46,0;r15 g22 b46'),
  tick('CHF', 'CASHP4M', '0.64005;0,7 5,7 7,0 46,0;r0 g7 b46'),
  tick('CHF', 'SWAPP15Y', '3.9785;0,7 3,7 5,0 46,0;r0 g5 b46'),
  tick('CHF', '', `0.24059;${FLAT_LOW};b46`, 's', 'Sec'),
  tick('CHF', 'SWAPP6Y', `3.9188;${FLAT_LOW};b46`),
  tick('CHF', 'CASHP8M', '1.0434;0,0 10,0 12,7 37,7 40,3 46,3;g0 r12 b46'),
  tick('CHF', 'SWAPP20Y', '3.8806;0,0 2,0 5,7 46,7;g0 r5 b46'),
  tick('CHF', 'CASHP2M', '0.44025;0,0 36,0 39,7 46,7;g0 r39 b46'),
  tick('CHF', 'SWAPP3Y', '3.1050;0,0 25,0 28,7 46,7;g0')
];

function spark(pts, dots) {
  const p = pts.split(' ').map(s => s.split(',').map(Number)).map(([x, y]) => [x + .5, y + 2.5]);
  const last = p[p.length - 1];
  const wide = last[0] > 60;
  const yAt = x => {
    for (let i = 1; i < p.length; i++) {
      const [a, b] = [p[i - 1], p[i]];
      if (x <= b[0]) return a[1] + (b[1] - a[1]) * (x - a[0]) / (b[0] - a[0]);
    }
    return last[1];
  };
  const line = 'M' + p.map(q => q.join(' ')).join('L');
  const fill = wide ? '' : `<path class="s-fill" d="${line}V10.500H.5z"/>`;
  const marks = (dots || '').split(' ').filter(Boolean).map(d => {
    const x = +d.slice(1) + .5;
    return `<circle class="s-${d[0]}" cx="${Math.max(x, 1.3)}" cy="${yAt(Math.max(x, p[0][0]))}" r="1.4"/>`;
  }).join('');
  return `<div class="spark"><svg>${fill}<path class="s-line" d="${line}"/>${marks}</svg></div>`;
}
function value(cell, mark, cls = '') {
  if (!cell) return '<div></div>';
  const [text, pts, dots] = cell.split(';');
  if (!pts) return `<div>${text}</div>`;
  const tail = text ? `<span class="${text.includes('-') ? 'neg' : ''}">${text}</span><i class="mk mk-${mark}"></i>` : '';
  return `<div class="${cls}">${spark(pts, dots)}${tail}</div>`;
}
function name(level, text, toggle) {
  const pad = 6 + level * 15 + (toggle ? 0 : 13);
  return `<div class="name" style="padding-left:${pad}px">${toggle ? '<i class="tog"></i>' : ''}<span>${text}</span></div>`;
}
const flip = { u: 'd', d: 'u' };
document.getElementById('portfolio').innerHTML =
  `<div class="row">${name(0, 'Demo MultiCurrency Swap Portfolio', true)}<div></div><div></div>` +
  value('USD 9,209,405.19;0,7 15,7 22,6 26,3 32,3 46,3;r10', 'u') + value(`USD 4,469,887,710.30;${FLAT_HIGH};`, 'u') + '</div>' +
  portfolio.map(([n, m, a, b, c, d], i) => {
    const fourth = d.includes(';') ? d : d + b.slice(b.indexOf(';'));
    const cls = ['cell-sel', 'cell-green'][i] || '';
    return `<div class="row">${name(1, 'IR Swap ' + n, false)}${value(a, m, cls)}${value(b, flip[m])}${value(c, m)}${value(fourth, flip[m])}</div>`;
  }).join('');

const graphRows = (rows, withProps) => rows.map(([lv, n, type, vn, cell, mark, fn, props]) =>
  `<div class="row">${name(lv, n, lv < 4)}<div>${type}</div><div>${vn}</div>${value(cell, mark)}<div>${fn}</div>${withProps ? `<div>${props}</div>` : ''}</div>`).join('');
document.getElementById('jpy').innerHTML = graphRows(jpy, false);
document.getElementById('chf').innerHTML = graphRows(chf, true);
```
